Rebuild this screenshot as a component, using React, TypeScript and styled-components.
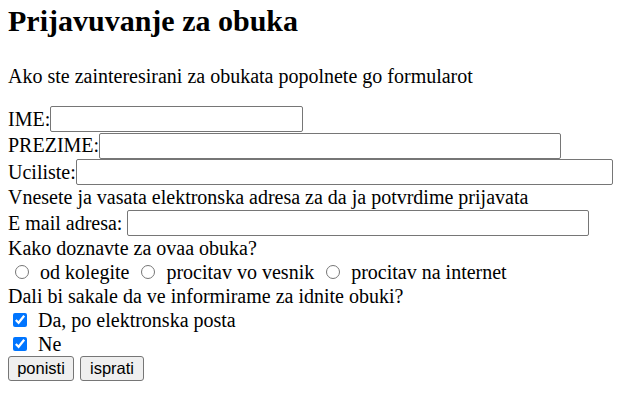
import React from "react";
import styled, { createGlobalStyle } from "styled-components";

const Global = createGlobalStyle`
  html, body { margin: 0; padding: 0; background: #fff; }
  body { font-family: "Liberation Serif", "Times New Roman", serif; color: #000; }
`;

const Page = styled.div`
  padding: 0 8px;
  font-size: 20px;
`;

const Title = styled.h1`
  margin: 0;
  padding-top: 4px;
  height: 40px;
  font-size: 30px;
  font-weight: bold;
  line-height: 34px;
`;

const Intro = styled.p`
  margin: 17px 0 0;
  line-height: 30px;
  height: 45px;
`;

const Form = styled.form`
  display: flex;
  flex-direction: column;
`;

const Row = styled.div<{ $h: number }>`
  display: flex;
  align-items: center;
  height: ${(p) => p.$h}px;
  white-space: nowrap;
`;

const TextInput = styled.input<{ $w: number; $gap?: number }>`
  box-sizing: border-box;
  width: ${(p) => p.$w}px;
  height: 26px;
  margin: 0 0 0 ${(p) => p.$gap ?? 0}px;
  padding: 2px 3px;
  border: 1px solid #767676;
  border-radius: 2px;
  background: #fff;
  font: 15px "Liberation Sans", Arial, sans-serif;
`;

const Option = styled.label<{ $first?: boolean }>`
  display: flex;
  align-items: center;
  gap: 11px;
  margin-left: ${(p) => (p.$first ? 7 : 12)}px;
`;

const Radio = styled.input.attrs({ type: "radio" })`
  width: 14px;
  height: 14px;
  margin: 0;
`;

const Check = styled.input.attrs({ type: "checkbox" })`
  width: 14px;
  height: 14px;
  margin: 0 11px 0 5px;
  accent-color: #0075ff;
`;

const Buttons = styled.div`
  display: flex;
  gap: 6px;
  height: 26px;
  align-items: flex-start;
`;

const Button = styled.button<{ $w: number }>`
  box-sizing: border-box;
  width: ${(p) => p.$w}px;
  height: 25px;
  padding: 0;
  border: 1px solid #767676;
  border-radius: 3px;
  background: #efefef;
  color: #000;
  font: 16.5px "Liberation Sans", Arial, sans-serif;
`;

export default function App() {
  return (
    <>
      <Global />
      <Page>
        <Title>Prijavuvanje za obuka</Title>
        <Intro>Ako ste zainteresirani za obukata popolnete go formularot</Intro>
        <Form onSubmit={(e) => e.preventDefault()}>
          <Row $h={26}>
            IME:<TextInput $w={253} />
          </Row>
          <Row $h={27}>
            PREZIME:<TextInput $w={462} />
          </Row>
          <Row $h={26}>
            Uciliste:<TextInput $w={537} />
          </Row>
          <Row $h={25}>Vnesete ja vasata elektronska adresa za da ja potvrdime prijavata</Row>
          <Row $h={26}>
            E mail adresa:<TextInput $w={462} $gap={5} />
          </Row>
          <Row $h={24}>Kako doznavte za ovaa obuka?</Row>
          <Row $h={24}>
            <Option $first>
              <Radio name="src" />od kolegite
            </Option>
            <Option>
              <Radio name="src" />procitav vo vesnik
            </Option>
            <Option>
              <Radio name="src" />procitav na internet
            </Option>
          </Row>
          <Row $h={24}>Dali bi sakale da ve informirame za idnite obuki?</Row>
          <Row $h={24}>
            <Check defaultChecked />Da, po elektronska posta
          </Row>
          <Row $h={24}>
            <Check defaultChecked />Ne
          </Row>
          <Buttons>
            <Button $w={66} type="reset">ponisti</Button>
            <Button $w={64} type="submit">isprati</Button>
          </Buttons>
        </Form>
      </Page>
    </>
  );
}
